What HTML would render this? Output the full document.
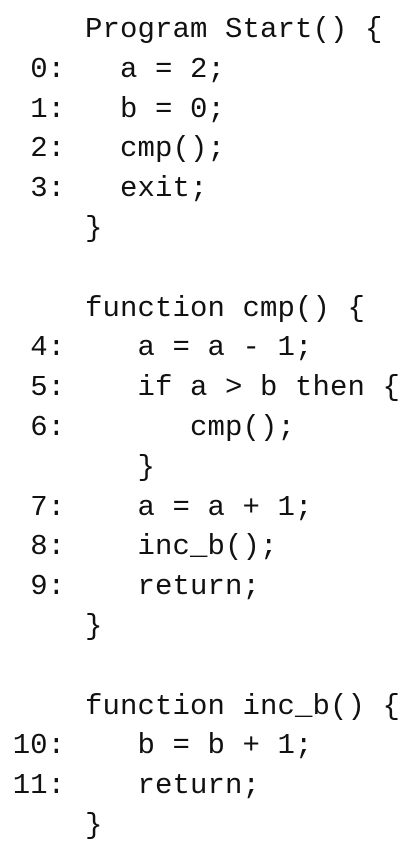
<!DOCTYPE html>
<html><head><style>
html,body{margin:0;padding:0;background:#fff;width:402px;height:848px;overflow:hidden}
pre{position:absolute;margin:0;font-family:"Liberation Mono",monospace;font-size:29px;line-height:39.8px;color:#111;top:10px}
#l{right:337px;text-align:right}
#c{left:85px;letter-spacing:0.1px}
</style></head><body>
<pre id="l">&nbsp;
0:
1:
2:
3:
&nbsp;
&nbsp;
&nbsp;
4:
5:
6:
&nbsp;
7:
8:
9:
&nbsp;
&nbsp;
&nbsp;
10:
11:
</pre>
<pre id="c">Program Start() {
  a = 2;
  b = 0;
  cmp();
  exit;
}

function cmp() {
   a = a - 1;
   if a > b then {
      cmp();
   }
   a = a + 1;
   inc_b();
   return;
}

function inc_b() {
   b = b + 1;
   return;
}</pre>
</body></html>
